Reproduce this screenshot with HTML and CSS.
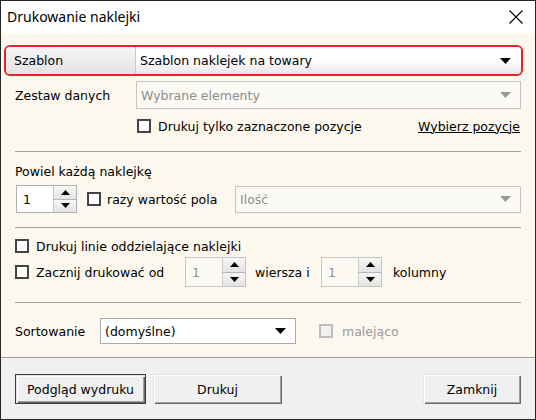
FILE: index.html
```html
<!DOCTYPE html>
<html lang="pl">
<head>
<meta charset="utf-8">
<title>Drukowanie naklejki</title>
<link rel="stylesheet" href="styles.css">
</head>
<body>
<div class="window">
  <div class="titlebar">
    <span class="title">Drukowanie naklejki</span>
    <svg class="close" width="14" height="14" viewBox="0 0 14 14"><path d="M0.5 0.5L13.5 13.5M13.5 0.5L0.5 13.5" stroke="#000" stroke-width="1.1" fill="none"/></svg>
  </div>
  <div class="content">
    <div class="hl-row">
      <div class="hl-label">Szablon</div>
      <div class="hl-combo">
        <span>Szablon naklejek na towary</span>
        <svg class="arrow" width="11" height="6" viewBox="0 0 11 6"><path d="M0 0H11L5.5 6Z" fill="#000"/></svg>
      </div>
    </div>

    <div class="row row-zestaw">
      <span class="lbl">Zestaw danych</span>
      <div class="combo disabled">
        <span>Wybrane elementy</span>
        <svg class="arrow" width="11" height="6" viewBox="0 0 11 6"><path d="M0 0H11L5.5 6Z" fill="#9a9a9a"/></svg>
      </div>
    </div>

    <div class="row row-check">
      <span class="cb"></span>
      <span class="cb-text">Drukuj tylko zaznaczone pozycje</span>
      <span class="link">Wybierz pozycje</span>
    </div>

    <div class="sep"></div>

    <div class="section-title">Powiel każdą naklejkę</div>

    <div class="row row-powiel">
      <div class="spin spin-first">
        <span class="spin-val">1</span>
        <div class="spin-btns">
          <div class="spin-btn"><svg width="9" height="5" viewBox="0 0 9 5"><path d="M4.5 0L9 5H0Z" fill="#000"/></svg></div>
          <div class="spin-btn"><svg width="9" height="5" viewBox="0 0 9 5"><path d="M0 0H9L4.5 5Z" fill="#000"/></svg></div>
        </div>
      </div>
      <span class="cb cb-razy"></span>
      <span class="cb-text razy-text">razy wartość pola</span>
      <div class="combo disabled combo-ilosc">
        <span>Ilość</span>
        <svg class="arrow" width="11" height="6" viewBox="0 0 11 6"><path d="M0 0H11L5.5 6Z" fill="#9a9a9a"/></svg>
      </div>
    </div>

    <div class="sep sep-2"></div>

    <div class="row row-linie">
      <span class="cb"></span>
      <span class="cb-text">Drukuj linie oddzielające naklejki</span>
    </div>

    <div class="row row-zacznij">
      <span class="cb"></span>
      <span class="cb-text zacznij-text">Zacznij drukować od</span>
      <div class="spin disabled">
        <span class="spin-val">1</span>
        <div class="spin-btns">
          <div class="spin-btn"><svg width="9" height="5" viewBox="0 0 9 5"><path d="M4.5 0L9 5H0Z" fill="#000"/></svg></div>
          <div class="spin-btn"><svg width="9" height="5" viewBox="0 0 9 5"><path d="M0 0H9L4.5 5Z" fill="#000"/></svg></div>
        </div>
      </div>
      <span class="wiersza">wiersza i</span>
      <div class="spin disabled">
        <span class="spin-val">1</span>
        <div class="spin-btns">
          <div class="spin-btn"><svg width="9" height="5" viewBox="0 0 9 5"><path d="M4.5 0L9 5H0Z" fill="#000"/></svg></div>
          <div class="spin-btn"><svg width="9" height="5" viewBox="0 0 9 5"><path d="M0 0H9L4.5 5Z" fill="#000"/></svg></div>
        </div>
      </div>
      <span class="kolumny">kolumny</span>
    </div>

    <div class="sep sep-3"></div>

    <div class="row row-sort">
      <span class="lbl-sort">Sortowanie</span>
      <div class="combo combo-sort">
        <span>(domyślne)</span>
        <svg class="arrow" width="11" height="6" viewBox="0 0 11 6"><path d="M0 0H11L5.5 6Z" fill="#000"/></svg>
      </div>
      <span class="cb cb-disabled"></span>
      <span class="cb-text disabled-text">malejąco</span>
    </div>
  </div>
  <div class="footer">
    <button class="btn btn-default btn-preview">Podgląd wydruku</button>
    <button class="btn btn-print">Drukuj</button>
    <button class="btn btn-close">Zamknij</button>
  </div>
</div>
</body>
</html>
```

FILE: styles.css
```css
html, body {
  margin: 0;
  padding: 0;
}

body {
  font-family: "DejaVu Sans", sans-serif;
  font-size: 12.5px;
  color: #000;
}

.window {
  width: 536px;
  height: 420px;
  box-sizing: border-box;
  border: 1px solid #262626;
  display: flex;
  flex-direction: column;
  background: #fcf8ee;
  overflow: hidden;
}

.titlebar {
  flex: none;
  height: 32px;
  background: #fff;
  display: flex;
  align-items: center;
  justify-content: space-between;
  padding: 0 12px 0 6px;
  font-family: "Noto Sans", sans-serif;
  font-size: 14px;
}

.title {
  margin-top: -1px;
}

.close {
  display: block;
  margin-top: -1px;
}

.content {
  flex: none;
  height: 324px;
  box-sizing: border-box;
  padding: 12px 14px 0 14px;
  display: flex;
  flex-direction: column;
}

/* highlighted Szablon row */
.hl-row {
  flex: none;
  height: 31px;
  box-sizing: border-box;
  margin: 0 -2px 0 -11px;
  border: 2px solid #e3252b;
  border-radius: 6px;
  display: flex;
  overflow: hidden;
  box-shadow: inset 0 0 2px rgba(0, 0, 0, 0.35);
}

.hl-label {
  width: 129px;
  flex: none;
  padding-left: 8px;
  box-sizing: border-box;
  display: flex;
  align-items: center;
  background: linear-gradient(#f5f5f5, #e3e3e3);
}

.hl-combo {
  flex: 1;
  display: flex;
  align-items: center;
  justify-content: space-between;
  padding: 0 10px 0 4px;
  border-left: 1px solid #c8c8c8;
  background: linear-gradient(#ffffff 50%, #e6e6e6);
}

.arrow {
  display: block;
  flex: none;
}

.row {
  flex: none;
  display: flex;
  align-items: center;
}

.row-zestaw {
  height: 28px;
  margin-top: 5px;
}

.lbl {
  width: 121px;
  flex: none;
}

.combo {
  flex: 1;
  height: 28px;
  box-sizing: border-box;
  border: 1px solid #acacac;
  background: #fff;
  display: flex;
  align-items: center;
  justify-content: space-between;
  padding: 0 9px 0 4px;
}

.combo.disabled {
  border-color: #c4c4c4;
  background: #fcfaf4;
  color: #8d8d8d;
}

.row-check {
  height: 20px;
  margin-top: 7px;
  padding-left: 122px;
}

.cb {
  flex: none;
  width: 14px;
  height: 14px;
  box-sizing: border-box;
  border: 2px solid #444;
  background: #fff;
}

.cb-text {
  margin-left: 7px;
}

.link {
  margin-left: auto;
  margin-right: 1px;
  text-decoration: underline;
}

.sep {
  flex: none;
  height: 1px;
  background: #a3a3a3;
  margin-top: 15px;
}

.section-title {
  flex: none;
  margin-top: 11px;
  height: 18px;
  line-height: 18px;
}

.row-powiel {
  height: 28px;
  margin-top: 4px;
}

.spin {
  flex: none;
  width: 61px;
  height: 28px;
  box-sizing: border-box;
  border: 1px solid #b0b0b0;
  background: #fff;
  display: flex;
}

.spin-first {
  margin-left: 1px;
}

.spin-val {
  flex: 1;
  padding-left: 6px;
  display: flex;
  align-items: center;
}

.spin.disabled {
  background: #fdfaf3;
  border-color: #c4c4c4;
}

.spin.disabled .spin-val {
  color: #8d8d8d;
}

.spin-btns {
  width: 22px;
  flex: none;
  display: flex;
  flex-direction: column;
  border-left: 1px solid #c6c6c6;
}

.spin-btn {
  flex: 1;
  display: flex;
  align-items: center;
  justify-content: center;
  background: linear-gradient(#f7f7f7, #e4e4e4);
}

.spin-btn + .spin-btn {
  border-top: 1px solid #b5b5b5;
}

.spin-btn svg {
  display: block;
}

.cb-razy {
  margin-left: 10px;
}

.razy-text {
  margin-left: 6px;
}

.combo-ilosc {
  flex: none;
  width: 286px;
  margin-left: auto;
  height: 27px;
}

.sep-2 {
  margin-top: 14px;
}

.row-linie {
  height: 20px;
  margin-top: 8px;
}

.row-zacznij {
  height: 30px;
  margin-top: 1px;
}

.row-zacznij .spin {
  height: 30px;
}

.zacznij-text {
  width: 149px;
  flex: none;
}

.wiersza {
  margin-left: 9px;
  width: 66px;
  flex: none;
}

.kolumny {
  margin-left: 11px;
}

.sep-3 {
  margin-top: 15px;
}

.row-sort {
  height: 26px;
  margin-top: 15px;
}

.lbl-sort {
  width: 85px;
  flex: none;
}

.combo-sort {
  flex: none;
  width: 196px;
  height: 26px;
}

.cb-disabled {
  margin-left: 23px;
  border-color: #bdbdbd;
  background: #f2f2f2;
}

.disabled-text {
  margin-left: 9px;
  color: #9a9a9a;
}

.footer {
  flex: 1;
  background: #f0f0f0;
  border-top: 1px solid #a3a3a3;
  display: flex;
  align-items: flex-start;
  padding: 16px 14px 0 14px;
}

.btn {
  height: 30px;
  box-sizing: border-box;
  font-family: "DejaVu Sans", sans-serif;
  font-size: 12.5px;
  color: #000;
  background: #f0f0f0;
  border: none;
  padding: 0;
  box-shadow: inset 1px 1px #e3e3e3, inset 2px 2px #fff, inset -1px -1px #696969, inset -2px -2px #a0a0a0;
}

.btn-default {
  border: 1px solid #3a3a3a;
}

.btn-preview {
  width: 131px;
}

.btn-print {
  width: 129px;
  margin-left: 7px;
}

.btn-close {
  width: 98px;
  margin-left: auto;
}
```
